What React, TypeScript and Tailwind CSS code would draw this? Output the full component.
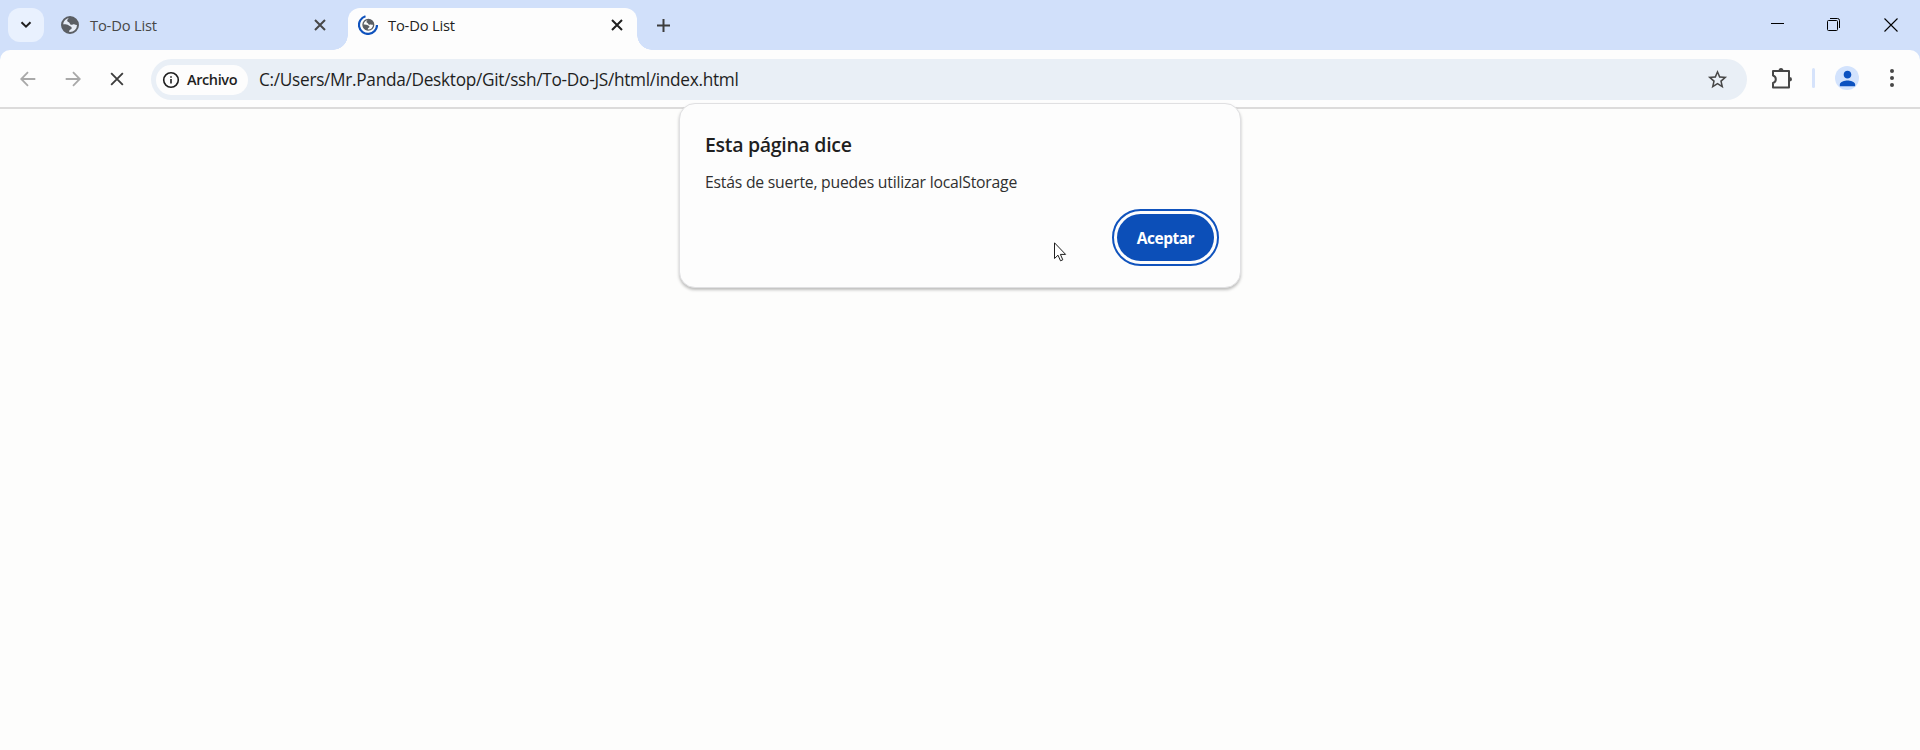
import React from "react";
import { MdPerson, MdOutlineStarBorder } from "react-icons/md";

type IconProps = { className?: string };

const Cross = ({ className }: IconProps) => (
  <svg viewBox="0 0 12 12" className={className} fill="none" stroke="currentColor">
    <path d="M1 1l10 10M11 1L1 11" />
  </svg>
);

const Arrow = ({ className }: IconProps) => (
  <svg viewBox="0 0 16 16" className={className} fill="none" stroke="currentColor" strokeWidth="1.8">
    <path d="M15.3 8H1.6M8 1.2L1.2 8L8 14.8" />
  </svg>
);

const GlobeShape = () => (
  <>
    <circle cx="9" cy="9" r="8" fill="none" stroke="#5b5f64" strokeWidth="2" />
    <path
      d="M8 1c-.3 2-1.800 2-1.800 3.800 0 1.600 2.200 1 2.600 2.600.300 1.400 1.700 1.600 3 1.100 1.500-.6 1.700.7 5 .3C16.800 4 13 .7 8 1zM1 8.500c2.500-.3 5-.2 6.500.800 1.500 1 3.200 1.200 3.200 2.700 0 1.800-2.400 1.300-2.500 3.200l-.2 1.800C3.500 16.700 1 13 1 8.500z"
      fill="#5b5f64"
    />
  </>
);

const Extension = ({ className }: IconProps) => (
  <svg viewBox="0 0 22 22" className={className} fill="none" stroke="currentColor" strokeWidth="2">
    <path d="M2 4h16v16.500H2V16c1.800-.5 2.800-1.800 2.800-3.700S3.800 9 2 8.500z" strokeLinejoin="round" />
    <path d="M7.600 3.500a2.400 2.600 0 0 1 4.800 0zM18.500 10a2.500 2.300 0 0 1 0 4.600z" fill="currentColor" stroke="none" />
  </svg>
);

function TabStrip() {
  return (
    <div className="flex h-[50px] bg-[#d1e0fa]">
      <div className="ml-2 mt-2 flex h-[34px] w-9 items-center justify-center rounded-xl bg-[#e9f1fe]">
        <svg viewBox="0 0 12 8" className="h-2 w-3" fill="none" stroke="#1f1f1f" strokeWidth="2">
          <path d="M1.500 1.200L6 5.700l4.500-4.500" />
        </svg>
      </div>
      <div className="flex h-[50px] w-[304px] items-center pl-[17px]">
        <svg viewBox="0 0 18 18" className="size-[18px]">
          <circle cx="9" cy="9" r="8" fill="#e6ecf6" />
          <GlobeShape />
        </svg>
        <span className="ml-[11px] pt-px text-[14.75px] tracking-[-0.2px] text-[#474747]">To-Do List</span>
        <Cross className="ml-auto mr-[22px] size-3 stroke-2 text-[#474747]" />
      </div>
      <div className="relative flex h-[42px] w-[289px] self-end rounded-t-xl bg-[#fdfdfd] pb-2 pl-[10px]">
        <div className="absolute -left-[15px] bottom-0 size-[15px] bg-[radial-gradient(circle_at_0_0,transparent_14.5px,#fdfdfd_15px)]" />
        <div className="absolute -right-[15px] bottom-0 size-[15px] bg-[radial-gradient(circle_at_100%_0,transparent_14.5px,#fdfdfd_15px)]" />
        <div className="flex w-full items-center">
          <svg viewBox="0 0 20 20" className="size-5">
            <g transform="translate(4.300 3.800) scale(0.67)">
              <GlobeShape />
            </g>
            <path d="M7.500 1.300A9 9 0 1 0 19 10" fill="none" stroke="#0f52bd" strokeWidth="2.200" />
          </svg>
          <span className="ml-[10px] pt-px text-[14.75px] tracking-[-0.2px] text-[#1f1f1f]">To-Do List</span>
          <Cross className="ml-auto mr-[14px] size-3 stroke-2 text-[#1f1f1f]" />
        </div>
      </div>
      <div className="flex h-[50px] flex-1 items-center pl-5">
        <svg viewBox="0 0 13 13" className="size-[13px]" fill="none" stroke="#3c3c3c" strokeWidth="2">
          <path d="M6.500 0v13M0 6.500h13" />
        </svg>
        <div className="ml-auto mr-[22px] flex items-center gap-[43px] text-black">
          <svg viewBox="0 0 14 14" className="size-[14px]">
            <path d="M1 5.500h13" stroke="currentColor" />
          </svg>
          <svg viewBox="0 0 14 14" className="size-[14px]" fill="none" stroke="currentColor">
            <rect x="0.500" y="2.500" width="10" height="10" rx="1" />
            <path d="M3 .5h7.500a2 2 0 0 1 2 2V10" />
          </svg>
          <svg viewBox="0 0 14 14" className="size-[14px]" fill="none" stroke="currentColor" strokeWidth="1.100">
            <path d="M.5.500l13 13M13.500.500l-13 13" />
          </svg>
        </div>
      </div>
    </div>
  );
}

function Toolbar() {
  return (
    <div className="bg-[#d1e0fa]">
      <div className="flex h-[59px] items-start rounded-t-[10px] border-b-2 border-[#dcdbdb] bg-[#fdfdfd] pt-[9px]">
        <div className="flex h-10 w-[151px] items-center pl-5">
          <Arrow className="size-4 text-[#a9a9a9]" />
          <Arrow className="ml-[29px] size-4 rotate-180 text-[#a9a9a9]" />
          <Cross className="ml-[29px] size-[14px] stroke-[1.6] text-[#3c3c3c]" />
        </div>
        <div className="flex h-[41px] w-[1596px] items-center rounded-full bg-[#e9eff6] pl-[5px] pr-[18px]">
          <div className="flex h-[30px] w-[92px] items-center rounded-full bg-[#fdfdfd] pl-[7px]">
            <svg viewBox="0 0 16 16" className="size-4 overflow-visible" fill="none" stroke="#1f1f1f">
              <circle cx="8" cy="8" r="7.300" strokeWidth="1.600" />
              <path d="M8 7v4.500M8 4.200v1.600" strokeWidth="1.600" />
            </svg>
            <span className="ml-2 text-[14.5px] font-semibold tracking-[-0.4px] text-[#1f1f1f]">Archivo</span>
          </div>
          <span className="ml-[11px] whitespace-nowrap pt-px text-[17.25px] tracking-[-0.3px] text-[#1f1f1f]">
            C:/Users/Mr.Panda/Desktop/Git/ssh/To-Do-JS/html/index.html
          </span>
          <MdOutlineStarBorder className="ml-auto size-[23px] text-[#474747]" />
        </div>
        <div className="flex h-[38px] flex-1 items-center pl-6">
          <Extension className="size-[22px] text-[#474747]" />
          <div className="ml-[19px] h-5 w-[3px] rounded-full bg-[#d6e3fb]" />
          <div className="ml-5 flex size-6 items-center justify-center rounded-full bg-[#d3e3fd]">
            <MdPerson className="size-[23px] text-[#0c52c0]" />
          </div>
          <svg viewBox="0 0 4 18" className="ml-[31px] h-[18px] w-1" fill="#474747">
            <circle cx="2" cy="2" r="2" />
            <circle cx="2" cy="9" r="2" />
            <circle cx="2" cy="16" r="2" />
          </svg>
        </div>
      </div>
    </div>
  );
}

function AlertDialog() {
  return (
    <div className="absolute left-[679px] top-[103px] h-[185px] w-[562px] rounded-2xl border border-[#e0e0e2] bg-[#fdfdfd] pl-[25px] pr-[21px] shadow-[0_2px_3px_rgba(0,0,0,0.25)]">
      <h1 className="pt-[27px] text-[19.5px] font-semibold leading-7 tracking-[-0.3px] text-[#1f1f1f]">
        Esta página dice
      </h1>
      <p className="mt-[11px] text-[15.75px] leading-6 tracking-[-0.22px] text-[#303030]">
        Estás de suerte, puedes utilizar localStorage
      </p>
      <div className="mt-[15px] flex justify-end">
        <button className="h-[57px] w-[107px] rounded-full border-2 border-[#1053bd] p-[3px]">
          <span className="flex h-full items-center justify-center rounded-full bg-[#0c4fb8] pt-0.5 text-[15.5px] font-bold tracking-[-0.5px] text-white">
            Aceptar
          </span>
        </button>
      </div>
    </div>
  );
}

export default function App() {
  return (
    <div className="relative h-[750px] w-[1920px] overflow-hidden bg-[#fdfdfc] font-['Open_Sans','Noto_Sans',sans-serif]">
      <TabStrip />
      <Toolbar />
      <AlertDialog />
      <svg viewBox="0 0 13 20" className="absolute left-[1054px] top-[242px] h-5 w-[13px]" fill="white" stroke="#1f1f1f">
        <path d="M.5.800v15.700l3.500-3.300 2.500 5.600 2.300-1-2.400-5.400h5.200z" />
      </svg>
    </div>
  );
}
